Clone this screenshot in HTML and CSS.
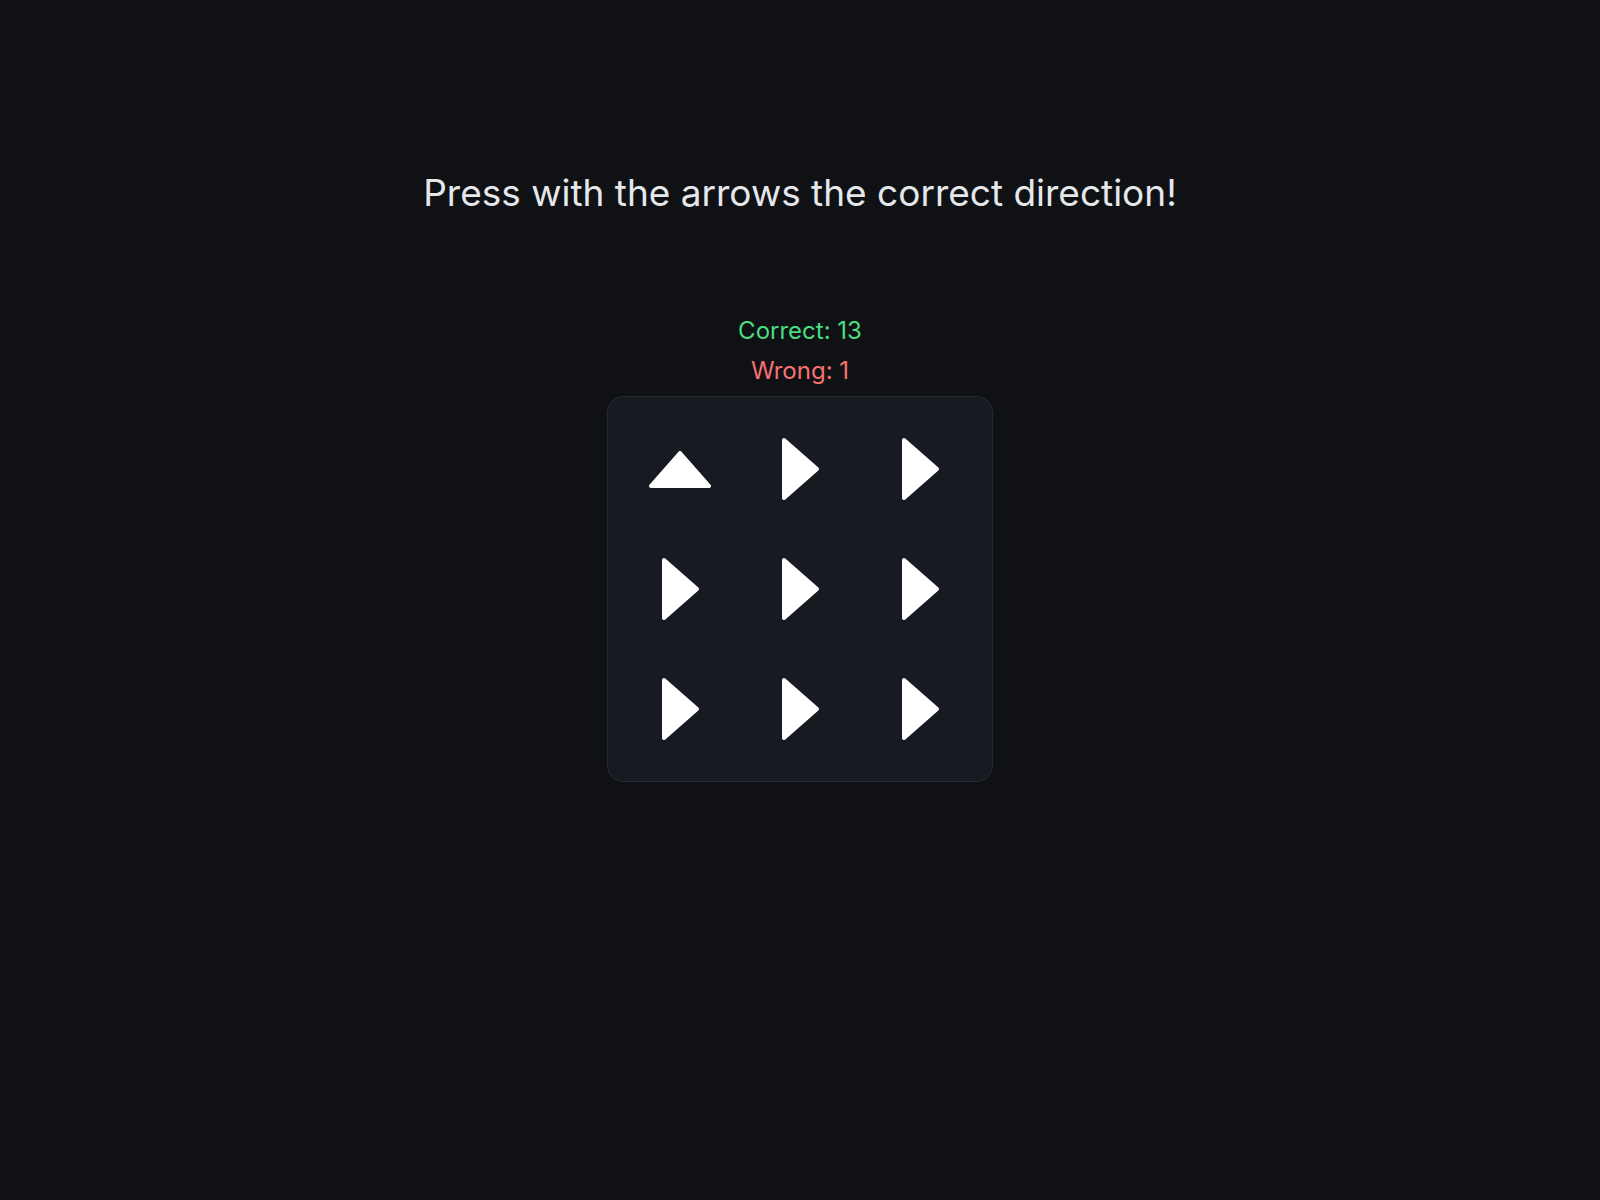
FILE: index.html
```html
<!DOCTYPE html>
<html lang="en">
<head>
<meta charset="utf-8">
<title>Arrows</title>
<link rel="stylesheet" href="styles.css">
</head>
<body>
<main class="page">
  <h1 class="title">Press with the arrows the correct direction!</h1>
  <div class="stats">
    <p class="stat stat-correct">Correct: 13</p>
    <p class="stat stat-wrong">Wrong: 1</p>
  </div>
  <div class="board">
    <div class="cell">
      <svg class="arrow arrow-up" viewBox="0 0 62 37"><polygon points="2,35 31,2 60,35"/></svg>
    </div>
    <div class="cell">
      <svg class="arrow arrow-right" viewBox="0 0 37 62"><polygon points="2,2 35,31 2,60"/></svg>
    </div>
    <div class="cell">
      <svg class="arrow arrow-right" viewBox="0 0 37 62"><polygon points="2,2 35,31 2,60"/></svg>
    </div>
    <div class="cell">
      <svg class="arrow arrow-right" viewBox="0 0 37 62"><polygon points="2,2 35,31 2,60"/></svg>
    </div>
    <div class="cell">
      <svg class="arrow arrow-right" viewBox="0 0 37 62"><polygon points="2,2 35,31 2,60"/></svg>
    </div>
    <div class="cell">
      <svg class="arrow arrow-right" viewBox="0 0 37 62"><polygon points="2,2 35,31 2,60"/></svg>
    </div>
    <div class="cell">
      <svg class="arrow arrow-right" viewBox="0 0 37 62"><polygon points="2,2 35,31 2,60"/></svg>
    </div>
    <div class="cell">
      <svg class="arrow arrow-right" viewBox="0 0 37 62"><polygon points="2,2 35,31 2,60"/></svg>
    </div>
    <div class="cell">
      <svg class="arrow arrow-right" viewBox="0 0 37 62"><polygon points="2,2 35,31 2,60"/></svg>
    </div>
  </div>
</main>
</body>
</html>
```

FILE: styles.css
```css
html, body {
  margin: 0;
  padding: 0;
  background: #0f1115;
  min-height: 100%;
}

body {
  font-family: Inter, "Noto Sans", "Liberation Sans", sans-serif;
  color: #e5e7eb;
}

.page {
  display: flex;
  flex-direction: column;
  align-items: center;
  padding-top: 173px;
}

.title {
  margin: 0 0 102px;
  font-size: 37px;
  line-height: 40px;
  font-weight: 400;
  color: #e5e7eb;
}

.stats {
  display: flex;
  flex-direction: column;
  align-items: center;
  gap: 8px;
}

.stat {
  margin: 0;
  font-size: 24px;
  line-height: 32px;
}

.stat-correct {
  color: #4ade80;
}

.stat-wrong {
  color: #f87171;
}

.board {
  margin-top: 9px;
  display: grid;
  grid-template-columns: repeat(3, 120px);
  grid-auto-rows: 120px;
  padding: 12px;
  background: #171a21;
  border: 1px solid #262a33;
  border-radius: 16px;
}

.cell {
  display: flex;
  align-items: center;
  justify-content: center;
}

.arrow polygon {
  fill: #ffffff;
  stroke: #ffffff;
  stroke-width: 4;
  stroke-linejoin: round;
}

.arrow-right {
  width: 37px;
  height: 62px;
}

.arrow-up {
  width: 62px;
  height: 37px;
}
```
